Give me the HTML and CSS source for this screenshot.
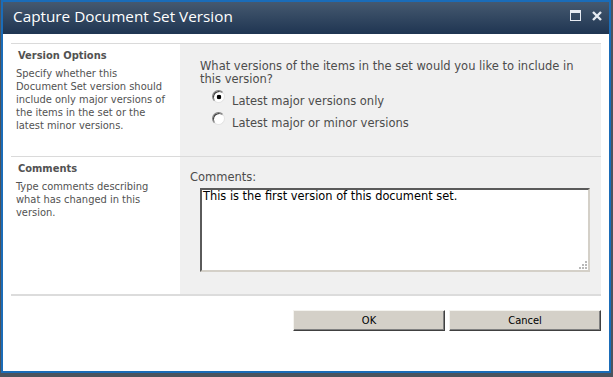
FILE: index.html
```html
<!DOCTYPE html>
<html>
<head>
	<meta http-equiv="Content-Type" content="text/html; charset=UTF-8"/>
	<title>Capture Document Set Version</title>
	<link rel="stylesheet" href="styles.css">
</head>
<body>

<div class="dialog">
	<div class="titlebar">
		<span class="title">Capture Document Set Version</span>
		<span class="controls">
			<svg class="ctl-max" width="11" height="11" viewBox="0 0 11 11">
				<rect x="0.5" y="0.5" width="10" height="10" fill="none" stroke="#e6ebf2" stroke-width="1"/>
				<rect x="0" y="0" width="11" height="3" fill="#e6ebf2"/>
			</svg>
			<svg class="ctl-close" width="10" height="10" viewBox="0 0 10 10">
				<path d="M1 1 L9 9 M9 1 L1 9" stroke="#e6ebf2" stroke-width="2.4"/>
			</svg>
		</span>
	</div>

	<div class="content">
		<div class="section section-options">
			<div class="label-col">
				<h3>Version Options</h3>
				<p class="desc">Specify whether this Document Set version should include only major versions of the items in the set or the latest minor versions.</p>
			</div>
			<div class="field-col">
				<p class="question">What versions of the items in the set would you like to include in this version?</p>
				<div class="radios">
					<label class="radio-row"><input type="radio" name="ver" checked> <span>Latest major versions only</span></label>
					<label class="radio-row"><input type="radio" name="ver"> <span>Latest major or minor versions</span></label>
				</div>
			</div>
		</div>

		<div class="section section-comments">
			<div class="label-col">
				<h3>Comments</h3>
				<p class="desc">Type comments describing what has changed in this version.</p>
			</div>
			<div class="field-col">
				<p class="field-label">Comments:</p>
				<div class="textbox">
					<textarea>This is the first version of this document set.</textarea>
					<svg class="grip" width="9" height="9" viewBox="0 0 9 9">
						<rect x="7" y="1" width="2" height="2" fill="#b8b8b8"/>
						<rect x="4" y="4" width="2" height="2" fill="#b8b8b8"/>
						<rect x="7" y="4" width="2" height="2" fill="#b8b8b8"/>
						<rect x="1" y="7" width="2" height="2" fill="#b8b8b8"/>
						<rect x="4" y="7" width="2" height="2" fill="#b8b8b8"/>
						<rect x="7" y="7" width="2" height="2" fill="#b8b8b8"/>
					</svg>
				</div>
			</div>
		</div>

		<div class="buttons">
			<button class="btn">OK</button>
			<button class="btn">Cancel</button>
		</div>
	</div>
</div>

</body>
</html>
```

FILE: styles.css
```css
* {
	box-sizing: border-box;
}

html, body {
	margin: 0;
	padding: 0;
	height: 100%;
}

body {
	background: #4b535d;
}

/* window frame */
.dialog {
	width: 610px;
	height: 373px;
	margin-left: 1px;
	border: 2px solid #1a6cb8;
	background: #fff;
}

.titlebar {
	height: 32px;
	display: flex;
	align-items: flex-start;
	padding: 4px 7px 0 10px;
	background: linear-gradient(#45596f, #1f3552);
	color: #fff;
}

.title {
	flex: 1;
	font: 15.3px/20px "Open Sans", sans-serif;
}

.controls {
	display: flex;
	align-items: center;
	gap: 11px;
	padding-top: 4px;
}

/* form body */
.content {
	padding: 9px 8px 0 8px;
}

.section {
	display: grid;
	grid-template-columns: 169px 1fr;
	border-top: 1px solid #dadada;
}

.section-options {
	height: 113px;
}

.section-comments {
	height: 140px;
	border-bottom: 2px solid #dcdcdc;
}

h3, p {
	margin: 0;
	padding: 0;
}

.label-col {
	padding: 5px 13px 0 5px;
	font-family: "DejaVu Sans Condensed", "DejaVu Sans", sans-serif;
	font-size: 11px;
	line-height: 13px;
	color: #525252;
}

.label-col h3 {
	font-size: 11px;
	font-weight: bold;
	padding-left: 2px;
}

.label-col .desc {
	margin-top: 5px;
}

.field-col {
	background: #f0f0f0;
	font-family: "DejaVu Sans", sans-serif;
	font-size: 11.5px;
	line-height: 13px;
	color: #4c4c4c;
}

/* version options */
.question {
	width: 385px;
	padding: 16px 0 0 20px;
	box-sizing: content-box;
}

.radios {
	padding: 2px 0 0 32px;
}

.radio-row {
	display: flex;
	align-items: flex-start;
	height: 22px;
}

.radio-row input {
	appearance: none;
	-webkit-appearance: none;
	width: 13px;
	height: 13px;
	margin: 2px 7px 0 0;
	border-radius: 50%;
	border: 1px solid;
	border-color: #808080 #e3e3e3 #e3e3e3 #808080;
	box-shadow: inset 1px 1px 0 #404040;
	background: #fff;
}

.radio-row input:checked {
	background: radial-gradient(circle at 6px 6px, #000 2px, #fff 2.6px);
}

.radio-row span {
	line-height: 22px;
	padding-top: 2px;
}

/* comments */
.field-label {
	padding: 14px 0 0 10px;
}

.textbox {
	position: relative;
	width: 390px;
	height: 84px;
	margin: 4px 0 0 20px;
}

.textbox textarea {
	display: block;
	width: 100%;
	height: 100%;
	margin: 0;
	padding: 0 1px;
	resize: none;
	border: 2px solid;
	border-color: #5a5a5a #d4d0c8 #d4d0c8 #5a5a5a;
	background: #fff;
	font-family: "DejaVu Sans", sans-serif;
	font-size: 11.4px;
	line-height: 13px;
	color: #000;
}

.grip {
	position: absolute;
	right: 3px;
	bottom: 3px;
}

/* buttons */
.buttons {
	display: flex;
	justify-content: flex-end;
	gap: 4px;
	margin-top: 14px;
}

.btn {
	width: 152px;
	height: 21px;
	padding: 0;
	background: #d4d0c8;
	border: 1px solid;
	border-color: #f4f3ef #404040 #404040 #f4f3ef;
	box-shadow: inset -1px -1px 0 #808080;
	font-family: "DejaVu Sans Condensed", "DejaVu Sans", sans-serif;
	font-size: 11px;
	color: #000;
}
```
